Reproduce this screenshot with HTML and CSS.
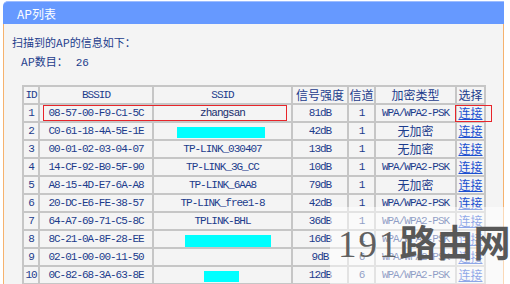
FILE: index.html
```html
<!DOCTYPE html>
<html lang="zh-CN">
<head>
    <meta charset="UTF-8">
    <title>AP列表</title>
    <link rel="stylesheet" href="styles.css">
</head>
<body>

    <div class="panel">
        <div class="panel-head">AP列表</div>
        <div class="panel-body">
            <p class="intro">扫描到的AP的信息如下：</p>
            <p class="count">AP数目：<span class="count-num">26</span></p>

            <div class="list-wrap">
                <table class="ap-table">
                    <colgroup>
                        <col style="width:16px"><col style="width:114px"><col style="width:139px">
                        <col style="width:56px"><col style="width:27px"><col style="width:81px"><col style="width:29px">
                    </colgroup>
                    <thead>
                        <tr>
                            <th class="mono">ID</th><th class="mono">BSSID</th><th class="mono">SSID</th>
                            <th>信号强度</th><th>信道</th><th>加密类型</th><th>选择</th>
                        </tr>
                    </thead>
                    <tbody>
                        <tr>
                            <td class="mono">1</td><td class="mono">08-57-00-F9-C1-5C</td><td class="mono ssid-bold">zhangsan</td>
                            <td class="mono">81dB</td><td class="mono">1</td><td class="mono">WPA/WPA2-PSK</td><td><a href="#">连接</a></td>
                        </tr>
                        <tr>
                            <td class="mono">2</td><td class="mono">C0-61-18-4A-5E-1E</td><td><span class="mask mask-a"></span></td>
                            <td class="mono">42dB</td><td class="mono">1</td><td>无加密</td><td><a href="#">连接</a></td>
                        </tr>
                        <tr>
                            <td class="mono">3</td><td class="mono">00-01-02-03-04-07</td><td class="mono">TP-LINK_030407</td>
                            <td class="mono">13dB</td><td class="mono">1</td><td>无加密</td><td><a href="#">连接</a></td>
                        </tr>
                        <tr>
                            <td class="mono">4</td><td class="mono">14-CF-92-B0-5F-90</td><td class="mono">TP-LINK_3G_CC</td>
                            <td class="mono">10dB</td><td class="mono">1</td><td class="mono">WPA/WPA2-PSK</td><td><a href="#">连接</a></td>
                        </tr>
                        <tr>
                            <td class="mono">5</td><td class="mono">A8-15-4D-E7-6A-A8</td><td class="mono">TP-LINK_6AA8</td>
                            <td class="mono">79dB</td><td class="mono">1</td><td>无加密</td><td><a href="#">连接</a></td>
                        </tr>
                        <tr>
                            <td class="mono">6</td><td class="mono">20-DC-E6-FE-38-57</td><td class="mono">TP-LINK_free1-8</td>
                            <td class="mono">42dB</td><td class="mono">1</td><td class="mono">WPA/WPA2-PSK</td><td><a href="#">连接</a></td>
                        </tr>
                        <tr>
                            <td class="mono">7</td><td class="mono">64-A7-69-71-C5-8C</td><td class="mono">TPLINK-BHL</td>
                            <td class="mono">36dB</td><td class="mono">1</td><td class="mono">WPA/WPA2-PSK</td><td><a href="#">连接</a></td>
                        </tr>
                        <tr>
                            <td class="mono">8</td><td class="mono">8C-21-0A-8F-28-EE</td><td><span class="mask mask-b"></span></td>
                            <td class="mono">16dB</td><td class="mono">1</td><td class="mono">WPA/WPA2-PSK</td><td><a href="#">连接</a></td>
                        </tr>
                        <tr>
                            <td class="mono">9</td><td class="mono">02-01-00-00-11-50</td><td></td>
                            <td class="mono">9dB</td><td class="mono">6</td><td class="mono">WPA/WPA2-PSK</td><td><a href="#">连接</a></td>
                        </tr>
                        <tr>
                            <td class="mono">10</td><td class="mono">0C-82-68-3A-63-8E</td><td><span class="mask mask-c"></span></td>
                            <td class="mono">12dB</td><td class="mono">6</td><td class="mono">WPA/WPA2-PSK</td><td><a href="#">连接</a></td>
                        </tr>
                        <tr>
                            <td></td><td></td><td></td><td></td><td></td><td></td><td></td>
                        </tr>
                    </tbody>
                </table>

                <!-- annotation marks over the screenshot -->
                <div class="mark mark-row"></div>
                <div class="mark mark-link"></div>
                <div class="watermark"><span class="wm-num">191</span>路由网</div>
            </div>
        </div>
    </div>

</body>
</html>
```

FILE: styles.css
```css
html, body {
    margin: 0;
    overflow: hidden;
    background: #ffffff;
}
body {
    font-family: "Noto Sans CJK SC", sans-serif;
    font-size: 12px;
    color: #1c3c8c;
}
.panel {
    margin: 1px 0 0 3px;
    width: 501px;
}
.panel-head {
    height: 23px;
    line-height: 23px;
    background-color: #6699ff;
    border-top: 1px solid #9dbcff;
    border-radius: 5px 0 0 0;
    color: #ffffff;
    padding-left: 14px;
    box-sizing: border-box;
}
.panel-body {
    background-color: #f4f4f4;
    border-left: 1px solid #f6b26e;
    border-right: 1px solid #f6b26e;
    height: 400px;
    padding-top: 9px;
}
.intro {
    margin: 0;
    padding-left: 8px;
    line-height: 18px;
    font-size: 11px;
}
.count {
    margin: 1px 0 0;
    padding-left: 17px;
    line-height: 18px;
    font-size: 11px;
}
.count-num {
    font-family: "Liberation Mono", monospace;
    font-size: 11px;
    margin-left: 8px;
}
.list-wrap {
    position: relative;
    margin: 13px 0 0 18px;
}
.ap-table {
    border-collapse: separate;
    border-spacing: 0;
    border: 1px solid #c6c6c6;
    table-layout: fixed;
    width: 462px;
}
.ap-table th, .ap-table td {
    border: 1px solid #c6c6c6;
    height: 16px;
    padding: 0;
    line-height: 16px;
    text-align: center;
    font-weight: normal;
    white-space: nowrap;
    overflow: hidden;
}
.mono {
    font-family: "Liberation Mono", monospace;
    font-size: 11px;
    letter-spacing: -1px;
}
.ssid-bold {
    font-weight: bold;
    color: #1a2f6e;
}
.ap-table a {
    color: #1a4fd0;
    text-decoration: underline;
}
.mask {
    display: inline-block;
    height: 11px;
    background: #00ffff;
    vertical-align: middle;
}
.mask-a { width: 88px; margin-left: -3px; }
.mask-b { width: 86px; height: 12px; margin-left: 10px; }
.mask-c { width: 35px; margin-left: -3px; }
.mark {
    position: absolute;
    border: 1px solid #e8252a;
}
.mark-row {
    left: 21px;
    top: 20px;
    width: 242px;
    height: 14px;
}
.mark-link {
    left: 433px;
    top: 20px;
    width: 35px;
    height: 15px;
}
.watermark {
    position: absolute;
    left: 308px;
    top: 122px;
    width: 190px;
    height: 90px;
    padding: 14px 0 0 8px;
    box-sizing: border-box;
    background: rgba(255, 255, 255, 0.5);
    color: #585858;
    font-size: 37px;
    font-weight: bold;
    line-height: 40px;
}
.wm-num {
    font-family: "Liberation Serif", serif;
    font-weight: normal;
    color: #606060;
    letter-spacing: 2px;
}
```
